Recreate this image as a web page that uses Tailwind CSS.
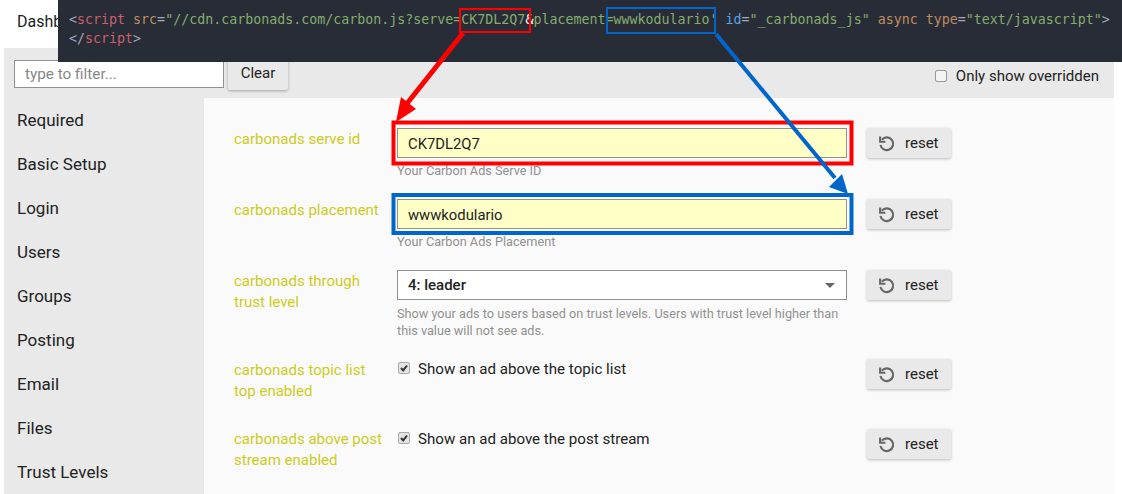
<!DOCTYPE html>
<html lang="en">
<head>
    <meta charset="UTF-8">
    <title>Carbon Ads settings</title>
    <script src="https://cdn.jsdelivr.net/npm/@tailwindcss/browser@4"></script>
</head>
<body class="bg-white w-[1122px] h-[494px] overflow-hidden relative font-['Roboto',sans-serif] text-[#222]">
    <!-- Admin tabs -->
    <div class="h-[48px] pl-[17px] pt-[12px] text-[16px] leading-[20px]">Dashboard</div>

    <!-- Filter bar -->
    <div class="ml-[4px] w-[1110px] h-[50px] bg-[#e9e9e9] flex items-start pl-[10px] pt-[12px]">
        <input type="text" placeholder="type to filter..." class="w-[210px] h-[28px] px-[10px] bg-white border border-[#919191] text-[15.3px] placeholder:text-[#888]">
        <button class="ml-[4px] w-[60px] h-[34px] bg-[#e9e9e9] rounded-[2px] shadow-[0_1px_3px_rgba(0,0,0,0.3)] text-[15px] -mt-[4px]">Clear</button>
        <label class="ml-auto mr-[15px] flex items-center text-[15px] leading-[20px] mt-[6px]">
            <span class="w-[12px] h-[12px] rounded-[2px] border border-[#999] bg-[#f4f4f4] mr-[9px]"></span>
            Only show overridden
        </label>
    </div>

    <div class="flex ml-[4px] w-[1110px] h-[396px]">
        <!-- Sidebar -->
        <nav class="w-[200px] bg-[#e9e9e9] pl-[13px] flex flex-col text-[17px]">
            <a class="h-[44px] leading-[44px]">Required</a>
            <a class="h-[44px] leading-[44px]">Basic Setup</a>
            <a class="h-[44px] leading-[44px]">Login</a>
            <a class="h-[44px] leading-[44px]">Users</a>
            <a class="h-[44px] leading-[44px]">Groups</a>
            <a class="h-[44px] leading-[44px]">Posting</a>
            <a class="h-[44px] leading-[44px]">Email</a>
            <a class="h-[44px] leading-[44px]">Files</a>
            <a class="h-[44px] leading-[44px]">Trust Levels</a>
        </nav>

        <!-- Settings -->
        <main class="flex-1 bg-[#fafafa] pt-[30px] pl-[30px] flex flex-col">
            <div class="flex h-[71px]">
                <div class="w-[163px] pr-[10px] pt-[1px] text-[15px] leading-[21px] text-[#cccc1a]">carbonads serve id</div>
                <div class="w-[450px]">
                    <div class="h-[30px] border border-[#919191] bg-[#ffffc6] pl-[10px] text-[14.8px] leading-[30px]">CK7DL2Q7</div>
                    <p class="text-[12.7px] leading-[16px] mt-[5px] text-[#919191]">Your Carbon Ads Serve ID</p>
                </div>
                <button class="ml-[20px] w-[84px] h-[30px] bg-[#e9e9e9] rounded-[2px] shadow-[0_1px_3px_rgba(0,0,0,0.25)] flex items-center pl-[11px] text-[15px]">
                    <svg class="w-[17px] h-[17px] mr-[10px]" viewBox="0 0 24 24" fill="none" stroke="#666" stroke-width="3"><path d="M5.500 6.500A9 9 0 1 1 3.500 14"/><path d="M3 2v7.500h7.500"/></svg>
                    reset
                </button>
            </div>
            <div class="flex h-[71px]">
                <div class="w-[163px] pr-[10px] pt-[1px] text-[15px] leading-[21px] text-[#cccc1a]">carbonads placement</div>
                <div class="w-[450px]">
                    <div class="h-[30px] border border-[#919191] bg-[#ffffc6] pl-[10px] text-[14.8px] leading-[30px]">wwwkodulario</div>
                    <p class="text-[12.7px] leading-[16px] mt-[5px] text-[#919191]">Your Carbon Ads Placement</p>
                </div>
                <button class="ml-[20px] w-[84px] h-[30px] bg-[#e9e9e9] rounded-[2px] shadow-[0_1px_3px_rgba(0,0,0,0.25)] flex items-center pl-[11px] text-[15px]">
                    <svg class="w-[17px] h-[17px] mr-[10px]" viewBox="0 0 24 24" fill="none" stroke="#666" stroke-width="3"><path d="M5.500 6.500A9 9 0 1 1 3.500 14"/><path d="M3 2v7.500h7.500"/></svg>
                    reset
                </button>
            </div>
            <div class="flex h-[89px]">
                <div class="w-[163px] pr-[10px] pt-[1px] text-[15px] leading-[21px] text-[#cccc1a]">carbonads through trust level</div>
                <div class="w-[450px]">
                    <div class="h-[30px] border border-[#919191] bg-white pl-[10px] pr-[11px] text-[15px] leading-[28px] font-medium flex items-center justify-between">
                        4: leader
                        <span class="w-0 h-0 border-x-[5px] border-x-transparent border-t-[5px] border-t-[#666]"></span>
                    </div>
                    <p class="text-[12.7px] leading-[17px] mt-[5px] text-[#919191]">Show your ads to users based on trust levels. Users with trust level higher than this value will not see ads.</p>
                </div>
                <button class="ml-[20px] w-[84px] h-[30px] bg-[#e9e9e9] rounded-[2px] shadow-[0_1px_3px_rgba(0,0,0,0.25)] flex items-center pl-[11px] text-[15px]">
                    <svg class="w-[17px] h-[17px] mr-[10px]" viewBox="0 0 24 24" fill="none" stroke="#666" stroke-width="3"><path d="M5.500 6.500A9 9 0 1 1 3.500 14"/><path d="M3 2v7.500h7.500"/></svg>
                    reset
                </button>
            </div>
            <div class="flex h-[70px]">
                <div class="w-[163px] pr-[10px] pt-[1px] text-[15px] leading-[21px] text-[#cccc1a]">carbonads topic list top enabled</div>
                <label class="w-[450px] flex items-start text-[15.1px] leading-[20px]">
                    <span class="w-[12px] h-[12px] ml-[1px] mt-[3px] rounded-[2px] border border-[#aaa] bg-[#e4e4e4] mr-[8px] flex items-center justify-center">
                        <svg class="w-[10px] h-[10px]" viewBox="0 0 10 10" fill="none" stroke="#333" stroke-width="2"><path d="M2 5l2.200 2.400L8 2.500"/></svg>
                    </span>
                    Show an ad above the topic list
                </label>
                <button class="ml-[20px] w-[84px] h-[30px] bg-[#e9e9e9] rounded-[2px] shadow-[0_1px_3px_rgba(0,0,0,0.25)] flex items-center pl-[11px] text-[15px]">
                    <svg class="w-[17px] h-[17px] mr-[10px]" viewBox="0 0 24 24" fill="none" stroke="#666" stroke-width="3"><path d="M5.500 6.500A9 9 0 1 1 3.500 14"/><path d="M3 2v7.500h7.500"/></svg>
                    reset
                </button>
            </div>
            <div class="flex h-[60px]">
                <div class="w-[163px] pr-[10px] text-[15px] leading-[21px] text-[#cccc1a]">carbonads above post stream enabled</div>
                <label class="w-[450px] flex items-start text-[15.1px] leading-[20px]">
                    <span class="w-[12px] h-[12px] ml-[1px] mt-[3px] rounded-[2px] border border-[#aaa] bg-[#e4e4e4] mr-[8px] flex items-center justify-center">
                        <svg class="w-[10px] h-[10px]" viewBox="0 0 10 10" fill="none" stroke="#333" stroke-width="2"><path d="M2 5l2.200 2.400L8 2.500"/></svg>
                    </span>
                    Show an ad above the post stream
                </label>
                <button class="ml-[20px] w-[84px] h-[30px] bg-[#e9e9e9] rounded-[2px] shadow-[0_1px_3px_rgba(0,0,0,0.25)] flex items-center pl-[11px] text-[15px]">
                    <svg class="w-[17px] h-[17px] mr-[10px]" viewBox="0 0 24 24" fill="none" stroke="#666" stroke-width="3"><path d="M5.500 6.500A9 9 0 1 1 3.500 14"/><path d="M3 2v7.500h7.500"/></svg>
                    reset
                </button>
            </div>
        </main>
    </div>

    <!-- Code snippet pasted over the screenshot -->
    <pre class="absolute left-[58px] top-0 w-[1064px] h-[62px] bg-[#282c37] pl-[11px] pt-[10px] font-['DejaVu_Sans_Mono',monospace] text-[13.3px] leading-[19px] text-[#a3aab8]">&lt;<span class="text-[#c9606a]">script</span> <span class="text-[#c08d5f]">src</span>=<span class="text-[#85ad6c]">"//cdn.carbonads.com/carbon.js?serve=CK7DL2Q7</span><span class="text-white">&amp;</span><span class="text-[#85ad6c]">placement=wwwkodulario'</span> <span class="text-[#5ba3e0]">id</span>=<span class="text-[#85ad6c]">"_carbonads_js"</span> <span class="text-[#c08d5f]">async</span> <span class="text-[#c08d5f]">type</span>=<span class="text-[#85ad6c]">"text/javascript"</span>&gt;
&lt;/<span class="text-[#c9606a]">script</span>&gt;</pre>

    <!-- Annotations -->
    <svg class="absolute left-0 top-0 pointer-events-none" width="1122" height="494" fill="none">
        <rect x="460" y="9" width="70" height="23" stroke="#f00" stroke-width="2"/>
        <rect x="607" y="8" width="108" height="25" stroke="#0066cc" stroke-width="2"/>
        <rect x="393.500" y="122.500" width="458" height="41" stroke="#f00" stroke-width="4"/>
        <rect x="393.500" y="195" width="458" height="38" stroke="#0066cc" stroke-width="4"/>
        <path d="M463 33L405 106" stroke="#f00" stroke-width="5"/>
        <path d="M396 122L401 97 L416 109Z" fill="#f00"/>
        <path d="M716 34L835 178" stroke="#0066cc" stroke-width="4"/>
        <path d="M848 194L829 187 L842 174Z" fill="#0066cc"/>
    </svg>
</body>
</html>
